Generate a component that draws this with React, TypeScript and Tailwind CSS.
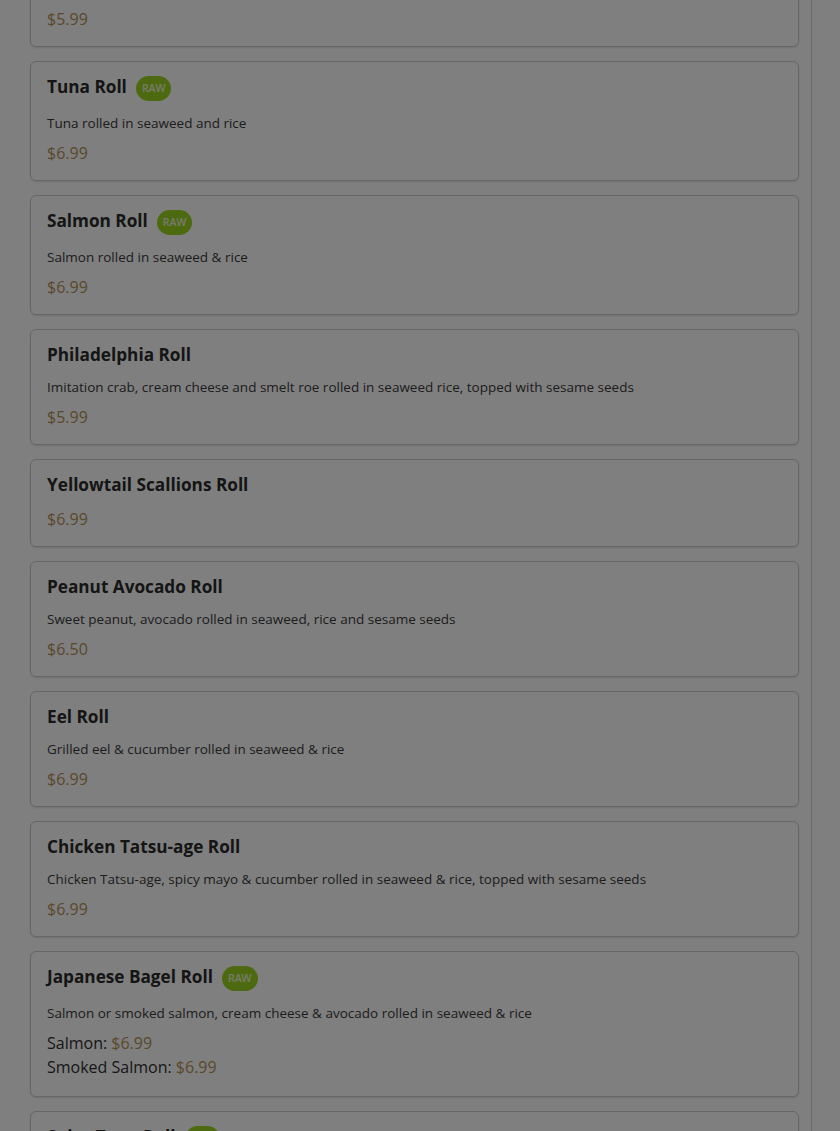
import React from 'react';

type Item = {
  name: string;
  raw?: boolean;
  desc?: string;
  price?: string;
  prices?: { label: string; price: string }[];
};

const ROLLS: Item[] = [
  { name: 'California Roll', desc: 'Imitation crab, avocado & cucumber rolled in seaweed & rice', price: '$5.99' },
  { name: 'Tuna Roll', raw: true, desc: 'Tuna rolled in seaweed and rice', price: '$6.99' },
  { name: 'Salmon Roll', raw: true, desc: 'Salmon rolled in seaweed & rice', price: '$6.99' },
  {
    name: 'Philadelphia Roll',
    desc: 'Imitation crab, cream cheese and smelt roe rolled in seaweed rice, topped with sesame seeds',
    price: '$5.99',
  },
  { name: 'Yellowtail Scallions Roll', price: '$6.99' },
  { name: 'Peanut Avocado Roll', desc: 'Sweet peanut, avocado rolled in seaweed, rice and sesame seeds', price: '$6.50' },
  { name: 'Eel Roll', desc: 'Grilled eel & cucumber rolled in seaweed & rice', price: '$6.99' },
  {
    name: 'Chicken Tatsu-age Roll',
    desc: 'Chicken Tatsu-age, spicy mayo & cucumber rolled in seaweed & rice, topped with sesame seeds',
    price: '$6.99',
  },
  {
    name: 'Japanese Bagel Roll',
    raw: true,
    desc: 'Salmon or smoked salmon, cream cheese & avocado rolled in seaweed & rice',
    prices: [
      { label: 'Salmon', price: '$6.99' },
      { label: 'Smoked Salmon', price: '$6.99' },
    ],
  },
  { name: 'Spicy Tuna Roll', raw: true, desc: 'Tuna, spicy mayo & cucumber rolled in seaweed & rice', price: '$6.99' },
];

function MenuCard({ item }: { item: Item }) {
  return (
    <div className="rounded-md border border-[#cdcdcd] bg-white px-4 pt-[15px] pb-[15px] shadow-[0_1px_2px_rgba(0,0,0,0.12)]">
      <div className="flex items-start gap-[9px] mb-3">
        <h3 className="text-[17.2px] leading-5 font-bold text-[#2a2a2a]">{item.name}</h3>
        {item.raw && (
          <span className="h-[25px] -mt-px px-[6px] rounded-full bg-[#9bd420] text-[10.5px] font-semibold text-[#eef5dc] flex items-center">
            RAW
          </span>
        )}
      </div>
      {item.desc && <p className="text-[13.5px] leading-5 text-[#3a3a3a] mb-2">{item.desc}</p>}
      {item.price && <div className="text-[16px] leading-6 text-[#b39157]">{item.price}</div>}
      {item.prices && (
        <div className="pb-0.5">
          {item.prices.map((p) => (
            <div key={p.label} className="text-[16px] leading-6 text-[#2e2e2e]">
              {p.label}: <span className="text-[#b39157]">{p.price}</span>
            </div>
          ))}
        </div>
      )}
    </div>
  );
}

export default function App() {
  return (
    <div
      className="relative h-screen overflow-hidden bg-white"
      style={{ fontFamily: '"Open Sans", "Noto Sans", sans-serif' }}
    >
      <div className="w-[812px] h-full border-r border-[#d2d2d2] flex flex-col">
        <div className="-mt-[69px] pl-[30px] pr-3 flex flex-col gap-[14px]">
          {ROLLS.map((item) => (
            <MenuCard key={item.name} item={item} />
          ))}
        </div>
      </div>

      {/* modal backdrop */}
      <div className="fixed inset-0 bg-black/50" />
    </div>
  );
}
